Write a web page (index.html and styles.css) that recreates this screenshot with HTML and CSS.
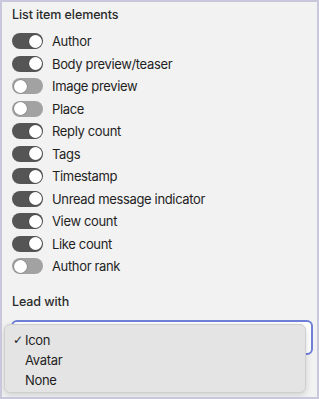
FILE: index.html
```html
<!DOCTYPE html>
<html>
<head>
<meta charset="utf-8">
<link rel="stylesheet" href="styles.css">
</head>
<body>
<div class="frame">
  <div class="title">List item elements</div>
  <ul class="list">
    <li class="row"><span class="toggle on"></span><span class="label">Author</span></li>
    <li class="row"><span class="toggle on"></span><span class="label">Body preview/teaser</span></li>
    <li class="row"><span class="toggle"></span><span class="label">Image preview</span></li>
    <li class="row"><span class="toggle"></span><span class="label">Place</span></li>
    <li class="row"><span class="toggle on"></span><span class="label">Reply count</span></li>
    <li class="row"><span class="toggle on"></span><span class="label">Tags</span></li>
    <li class="row"><span class="toggle on"></span><span class="label">Timestamp</span></li>
    <li class="row"><span class="toggle on"></span><span class="label">Unread message indicator</span></li>
    <li class="row"><span class="toggle on"></span><span class="label">View count</span></li>
    <li class="row"><span class="toggle on"></span><span class="label">Like count</span></li>
    <li class="row"><span class="toggle"></span><span class="label">Author rank</span></li>
  </ul>
  <div class="title lead">Lead with</div>
  <div class="select-wrap">
    <div class="select"></div>
    <div class="menu">
      <div class="opt"><span class="check">✓</span>Icon</div>
      <div class="opt"><span class="check"></span>Avatar</div>
      <div class="opt"><span class="check"></span>None</div>
    </div>
  </div>
</div>
</body>
</html>
```
FILE: styles.css
```css
html, body {
  margin: 0;
  padding: 0;
}
body {
  font-family: Inter, "Noto Sans", sans-serif;
  color: #1f1f1f;
  background: #c9c7dc;
}
.frame {
  box-sizing: border-box;
  width: 319px;
  height: 399px;
  border: 2px solid #c9c7dc;
  background: #f2f2f2;
  padding: 5px 0 0 10px;
  overflow: hidden;
}
.title {
  font-size: 12.5px;
  font-weight: 500;
  line-height: 16px;
  letter-spacing: -0.1px;
  color: #2a2a2a;
}
.list {
  list-style: none;
  margin: 6.75px 0 0 0;
  padding: 0;
}
.row {
  display: flex;
  align-items: center;
  height: 22.5px;
}
.toggle {
  position: relative;
  box-sizing: border-box;
  width: 31px;
  height: 16px;
  border-radius: 8px;
  background: #a2a2a2;
  flex: none;
}
.toggle.on {
  background: #555555;
}
.toggle::after {
  content: "";
  position: absolute;
  top: 1.5px;
  left: 1.5px;
  width: 13px;
  height: 13px;
  border-radius: 50%;
  background: #ffffff;
  box-shadow: 0 0 0 0.5px rgba(0,0,0,0.25);
}
.toggle.on::after {
  left: 16.5px;
}
.label {
  margin-left: 9px;
  font-size: 13px;
  line-height: 16px;
  letter-spacing: -0.35px;
}
.lead {
  margin-top: 17px;
}
.select-wrap {
  position: relative;
  margin-top: 10px;
  width: 302px;
  margin-left: -1px;
}
.select {
  box-sizing: border-box;
  height: 35px;
  border: 2px solid #6f80d8;
  border-radius: 6px;
  background: #ffffff;
}
.menu {
  position: absolute;
  left: -7px;
  top: 4px;
  width: 302px;
  box-sizing: border-box;
  height: 69px;
  padding-top: 5px;
  background: #e4e4e4;
  border: 1px solid #cfcfcf;
  border-radius: 6px;
  box-shadow: 0 2px 6px rgba(0,0,0,0.15);
}
.opt {
  display: flex;
  align-items: center;
  height: 20px;
  font-size: 13px;
  letter-spacing: -0.3px;
  color: #1f1f1f;
}
.check {
  display: inline-block;
  width: 12px;
  margin-left: 8px;
  font-family: "DejaVu Sans", sans-serif;
  font-size: 12px;
  letter-spacing: 0;
}
```
